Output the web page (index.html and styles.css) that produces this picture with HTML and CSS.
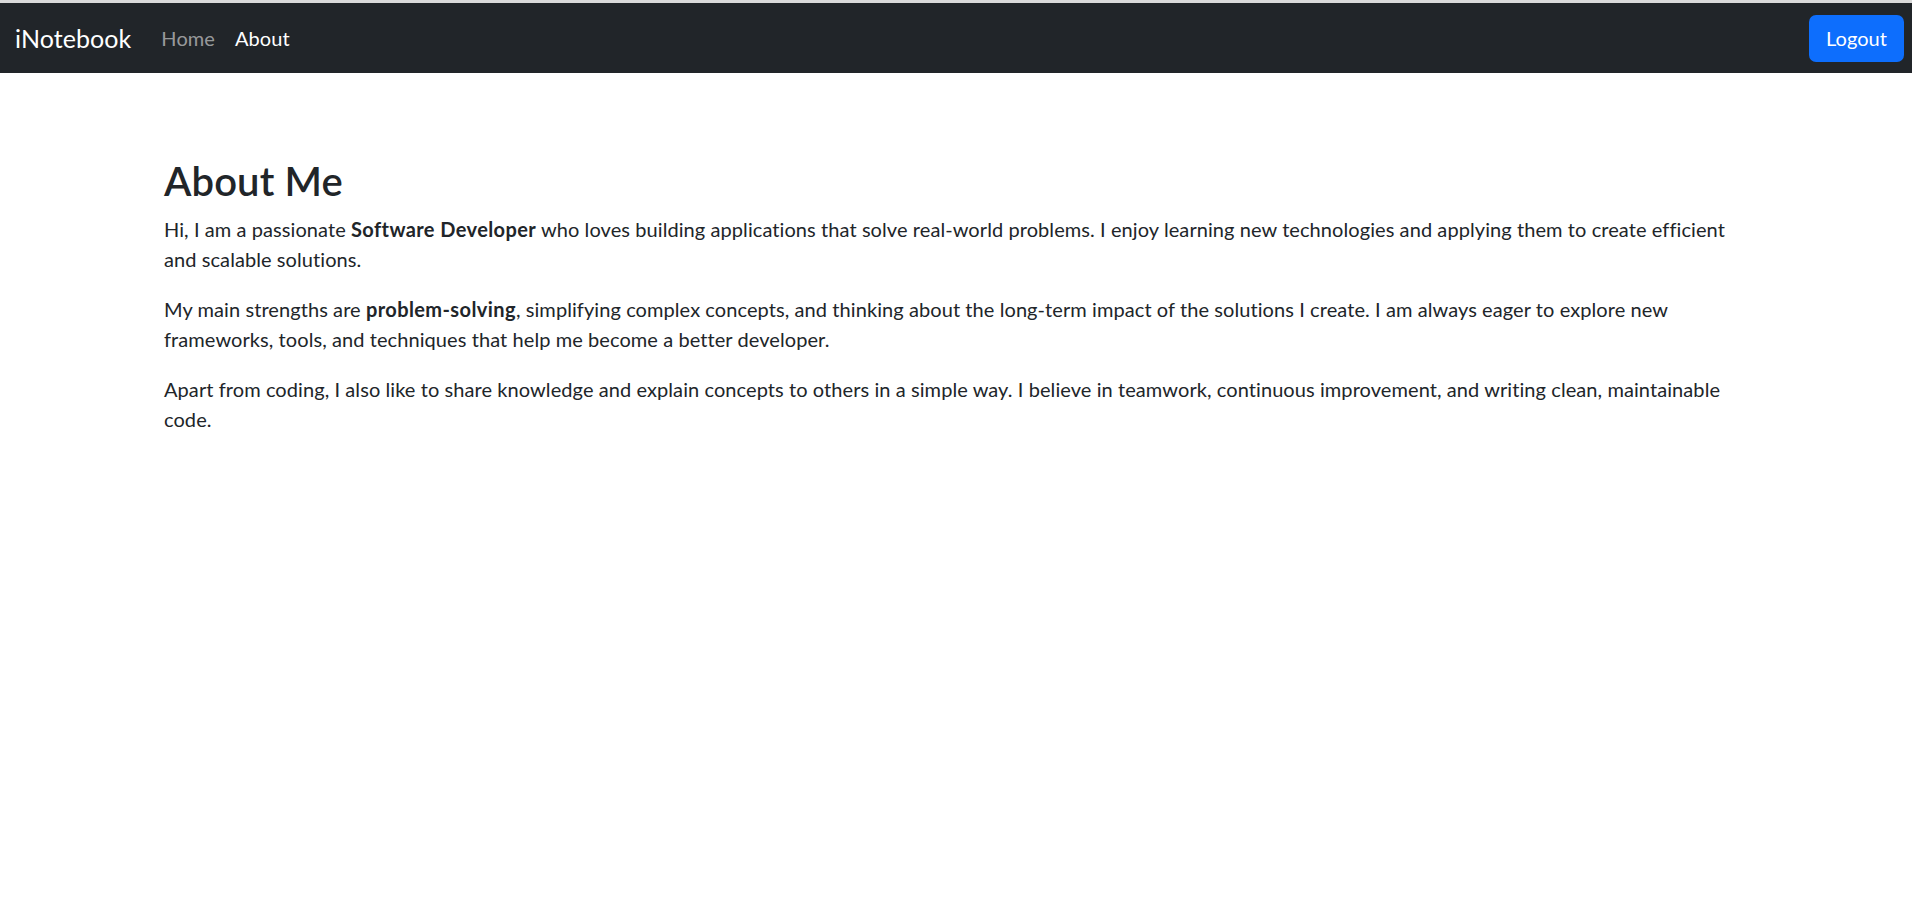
FILE: index.html
```html
<!DOCTYPE html>
<html lang="en">
<head>
<meta charset="utf-8">
<title>iNotebook</title>
<link rel="stylesheet" href="styles.css">
</head>
<body>
<div class="topline"></div>
<nav class="navbar">
  <a class="brand" href="#">iNotebook</a>
  <ul class="nav">
    <li><a class="nav-link" href="#">Home</a></li>
    <li><a class="nav-link active" href="#">About</a></li>
  </ul>
  <button class="btn-logout" type="button">Logout</button>
</nav>
<main class="container">
  <h2 class="title">About Me</h2>
  <p>Hi, I am a passionate <strong>Software Developer</strong> who loves building applications that solve real-world problems. I enjoy learning new technologies and applying them to create efficient and scalable solutions.</p>
  <p>My main strengths are <strong>problem-solving</strong>, simplifying complex concepts, and thinking about the long-term impact of the solutions I create. I am always eager to explore new frameworks, tools, and techniques that help me become a better developer.</p>
  <p>Apart from coding, I also like to share knowledge and explain concepts to others in a simple way. I believe in teamwork, continuous improvement, and writing clean, maintainable code.</p>
</main>
</body>
</html>
```
FILE: styles.css
```css
* { box-sizing: border-box; }
html, body { margin: 0; padding: 0; }
body {
  font-family: "Lato", "Liberation Sans", sans-serif;
  font-size: 20px;
  line-height: 30px;
  color: #212529;
  background: #fff;
  letter-spacing: 0.08px;
}
.topline { height: 3px; background: #dadada; }
.navbar {
  height: 70px;
  background: #212529;
  display: flex;
  align-items: center;
  padding: 0 8px 0 15px;
}
.brand {
  font-size: 25px;
  line-height: 37px;
  color: #fff;
  text-decoration: none;
  margin-right: 20px;
}
.nav {
  list-style: none;
  margin: 0;
  padding: 0;
  display: flex;
}
.nav-link {
  display: block;
  padding: 0 10px;
  font-size: 20px;
  color: rgba(255, 255, 255, 0.55);
  text-decoration: none;
}
.nav-link.active { color: #fff; }
.btn-logout {
  margin-left: auto;
  width: 95px;
  height: 47px;
  border: 0;
  border-radius: 7px;
  background: #0d6efd;
  color: #fff;
  font-family: inherit;
  font-size: 20px;
  letter-spacing: 0.08px;
  cursor: pointer;
}
.container {
  width: 1584px;
  margin: 0 auto;
  padding-top: 84px;
}
.title {
  font-size: 40px;
  line-height: 48px;
  font-weight: 600;
  margin: 0 0 9px;
  letter-spacing: 0.1px;
}
p { margin: 0 0 20px; }
strong { font-weight: 700; letter-spacing: 0.4px; }
```
